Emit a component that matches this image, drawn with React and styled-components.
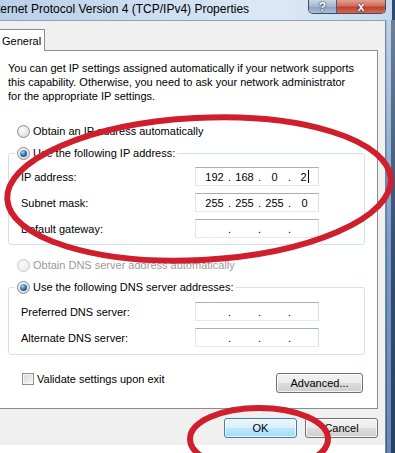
import React from "react";
import styled, { createGlobalStyle } from "styled-components";

const GlobalStyle = createGlobalStyle`
  html, body {
    margin: 0;
    padding: 0;
    background: #fff;
  }
  body {
    overflow: hidden;
    font-family: "Liberation Sans", Arial, sans-serif;
  }
`;

const Window = styled.div`
  position: relative;
  width: 395px;
  height: 453px;
  overflow: hidden;
  display: flex;
  flex-direction: column;
`;

const TitleBar = styled.div`
  height: 20px;
  flex: none;
  display: flex;
  align-items: flex-start;
  box-sizing: border-box;
  background: linear-gradient(to right, #b9cfe7 0%, #cddef0 40%, #dce8f5 70%, #c6d8ec 100%);
  border-right: 3px solid #2f4a70;
`;

const Title = styled.div`
  flex: 1;
  margin-left: -13px; /* "Int" is cut off by the crop */
  padding-top: 2px;
  font-size: 12px;
  line-height: 14px;
  color: #000;
  white-space: nowrap;
`;

const CaptionButtons = styled.div`
  display: flex;
  height: 13px;
  margin-right: 6px;
  border: 1px solid #3b4d68;
  border-top: none;
  border-radius: 0 0 5px 5px;
  overflow: hidden;
`;

const CaptionButton = styled.div`
  width: ${(p) => p.$w}px;
  display: flex;
  align-items: center;
  justify-content: center;
  font: bold 12px "Liberation Sans", Arial, sans-serif;
  color: #fff;
  text-shadow: 0 0 2px #1d2a3c, 0 0 1px #1d2a3c;
  background: ${(p) =>
    p.$close
      ? "linear-gradient(#e3a090, #d06f5e 45%, #c2432f 55%, #d4694f)"
      : "linear-gradient(#c9d6e6, #a3b6ce 50%, #8ea3c0 55%, #abbdd3)"};
  & + & {
    border-left: 1px solid #4a5e7c;
  }
`;

const Main = styled.div`
  flex: 1;
  display: flex;
`;

const Body = styled.div`
  flex: 1;
  display: flex;
  flex-direction: column;
  border-top: 1px solid #8da2bd;
  border-right: 1px solid #6f85a3;
  background: linear-gradient(to bottom, #f0f0f0 calc(100% - 8px), #fff calc(100% - 8px));
`;

const Frame = styled.div`
  width: 9px;
  flex: none;
  background:
    linear-gradient(to right, transparent 0 1px, rgba(255, 255, 255, 0.25) 1px 5px, rgba(0, 0, 0, 0.35) 5px),
    linear-gradient(to bottom, #a9c3e2 0%, #7e9fcc 25%, #4f76ad 55%, #3c6198 100%);
`;

const TabStrip = styled.div`
  display: flex;
  padding-top: 8px;
`;

const Tab = styled.div`
  position: relative;
  z-index: 1;
  margin-left: -8px;
  margin-bottom: -1px;
  width: 53px;
  height: 22px;
  box-sizing: border-box;
  padding: 4px 0 0 9px;
  border: 1px solid #898c95;
  border-bottom: none;
  background: #fff;
  font-size: 11px;
  line-height: 14px;
  color: #000;
`;

const Panel = styled.div`
  margin-right: 7px;
  padding: 10px 12px 15px 8px;
  background: #fff;
  border: 1px solid #898c95;
  border-left: none;
  font-size: 11px;
  color: #000;
`;

const Intro = styled.p`
  margin: 0;
  line-height: 14px;
`;

const OptionRow = styled.label`
  display: flex;
  align-items: center;
  gap: 3px;
  height: 16px;
  margin-top: ${(p) => p.$top || 0}px;
  padding-left: 9px;
  line-height: 14px;
  color: ${(p) => (p.$disabled ? "#9a9a9a" : "#000")};
`;

const Radio = styled.span`
  width: 13px;
  height: 13px;
  flex: none;
  box-sizing: border-box;
  border-radius: 50%;
  border: 1px solid ${(p) => (p.$disabled ? "#c9c9c9" : "#8b8c8c")};
  background: ${(p) =>
    p.$disabled
      ? "radial-gradient(circle at 40% 35%, #fafafa, #ececec 70%)"
      : "radial-gradient(circle at 40% 35%, #ffffff, #e2e2e2 65%, #cdcdcd)"};
  display: flex;
  align-items: center;
  justify-content: center;
  &::after {
    content: "";
    display: ${(p) => (p.$checked ? "block" : "none")};
    width: 7px;
    height: 7px;
    border-radius: 50%;
    background: radial-gradient(circle at 38% 32%, #9ad6f6, #2a6aa3 55%, #123a66);
  }
`;

const Group = styled.fieldset`
  margin: 6px 0 0;
  padding: ${(p) => p.$pad}px 0;
  border: 1px solid #d5dfe5;
  border-radius: 3px;
  min-width: 0;
`;

const Legend = styled.legend`
  margin-left: 6px;
  padding: 0 2px;
  display: flex;
  align-items: center;
  gap: 3px;
  height: 16px;
  line-height: 14px;
`;

const Fields = styled.div`
  display: grid;
  grid-template-columns: 174px 124px;
  row-gap: 7px;
  padding-left: 12px;
`;

const FieldLabel = styled.span`
  align-self: center;
  line-height: 14px;
`;

const IpBox = styled.div`
  height: 19px;
  box-sizing: border-box;
  display: flex;
  align-items: center;
  padding-left: 5px;
  border: 1px solid;
  border-color: #abadb3 #dbdfe6 #e3e9ef #e2e3ea;
  background: #fff;
  line-height: 14px;
`;

const Octet = styled.span`
  width: 27px;
  text-align: center;
  white-space: nowrap;
`;

const Dot = styled.span`
  width: 3px;
  text-align: center;
`;

const Caret = styled.span`
  display: inline-block;
  width: 1px;
  height: 13px;
  margin-left: 1px;
  vertical-align: -2px;
  background: #000;
`;

const BottomRow = styled.div`
  display: flex;
  justify-content: space-between;
  align-items: flex-start;
  margin-top: 16px;
  padding: 0 2px 0 14px;
`;

const CheckLabel = styled.label`
  display: flex;
  align-items: center;
  gap: 3px;
  height: 16px;
  line-height: 14px;
`;

const Checkbox = styled.span`
  width: 12px;
  height: 12px;
  box-sizing: border-box;
  border: 1px solid #8e8f8f;
  background: linear-gradient(135deg, #d6d6d6, #f8f8f8);
  box-shadow: inset 0 0 0 1px #f4f4f4;
`;

const Button = styled.button`
  width: ${(p) => p.$w}px;
  height: 20px;
  margin-top: ${(p) => p.$top || 0}px;
  padding: 0;
  box-sizing: border-box;
  border: 1px solid ${(p) => (p.$primary ? "#3c7fb1" : "#707070")};
  border-radius: 3px;
  background: ${(p) =>
    p.$primary
      ? "linear-gradient(#eaf6fd, #d9f0fc 50%, #bee6fd 50%, #a7d9f5)"
      : "linear-gradient(#f2f2f2, #ebebeb 50%, #dddddd 50%, #cfcfcf)"};
  box-shadow: inset 0 0 0 1px rgba(255, 255, 255, 0.75);
  font: 11px "Liberation Sans", Arial, sans-serif;
  color: #000;
`;

const Footer = styled.div`
  display: flex;
  justify-content: flex-end;
  gap: 8px;
  margin-top: 9px;
  padding-right: 7px;
`;

const Marks = styled.svg`
  position: absolute;
  inset: 0;
  pointer-events: none;
`;

const IpValue = ({ parts, caret }) => (
  <IpBox>
    {parts.map((p, i) => (
      <React.Fragment key={i}>
        {i > 0 && <Dot>.</Dot>}
        <Octet>
          {p}
          {caret && i === parts.length - 1 && <Caret />}
        </Octet>
      </React.Fragment>
    ))}
  </IpBox>
);

const blank = ["", "", "", ""];

export default function App() {
  return (
    <Window>
      <GlobalStyle />
      <TitleBar>
        <Title>Internet Protocol Version 4 (TCP/IPv4) Properties</Title>
        <CaptionButtons>
          <CaptionButton $w={27}>?</CaptionButton>
          <CaptionButton $w={48} $close>
            x
          </CaptionButton>
        </CaptionButtons>
      </TitleBar>
      <Main>
        <Body>
          <TabStrip>
            <Tab>General</Tab>
          </TabStrip>
          <Panel>
            <Intro>
              You can get IP settings assigned automatically if your network supports
              <br />
              this capability. Otherwise, you need to ask your network administrator
              <br />
              for the appropriate IP settings.
            </Intro>

            <OptionRow $top={20}>
              <Radio />
              Obtain an IP address automatically
            </OptionRow>
            <Group $pad={6}>
              <Legend>
                <Radio $checked />
                Use the following IP address:
              </Legend>
              <Fields>
                <FieldLabel>IP address:</FieldLabel>
                <IpValue parts={["192", "168", "0", "2"]} caret />
                <FieldLabel>Subnet mask:</FieldLabel>
                <IpValue parts={["255", "255", "255", "0"]} />
                <FieldLabel>Default gateway:</FieldLabel>
                <IpValue parts={blank} />
              </Fields>
            </Group>

            <OptionRow $top={12} $disabled>
              <Radio $disabled />
              Obtain DNS server address automatically
            </OptionRow>
            <Group $pad={7}>
              <Legend>
                <Radio $checked />
                Use the following DNS server addresses:
              </Legend>
              <Fields>
                <FieldLabel>Preferred DNS server:</FieldLabel>
                <IpValue parts={blank} />
                <FieldLabel>Alternate DNS server:</FieldLabel>
                <IpValue parts={blank} />
              </Fields>
            </Group>

            <BottomRow>
              <CheckLabel>
                <Checkbox />
                Validate settings upon exit
              </CheckLabel>
              <Button $w={87} $top={2}>
                Advanced...
              </Button>
            </BottomRow>
          </Panel>
          <Footer>
            <Button $w={73} $primary>
              OK
            </Button>
            <Button $w={73}>Cancel</Button>
          </Footer>
        </Body>
        <Frame />
      </Main>

      <Marks width="395" height="453" viewBox="0 0 395 453">
        <g fill="none" stroke="#cf1f2c" strokeLinecap="round">
          <ellipse cx="199" cy="189" rx="192" ry="71" strokeWidth="6" transform="rotate(-3 199 189)" />
          <ellipse cx="259" cy="439" rx="69" ry="31" strokeWidth="6" />
        </g>
      </Marks>
    </Window>
  );
}
